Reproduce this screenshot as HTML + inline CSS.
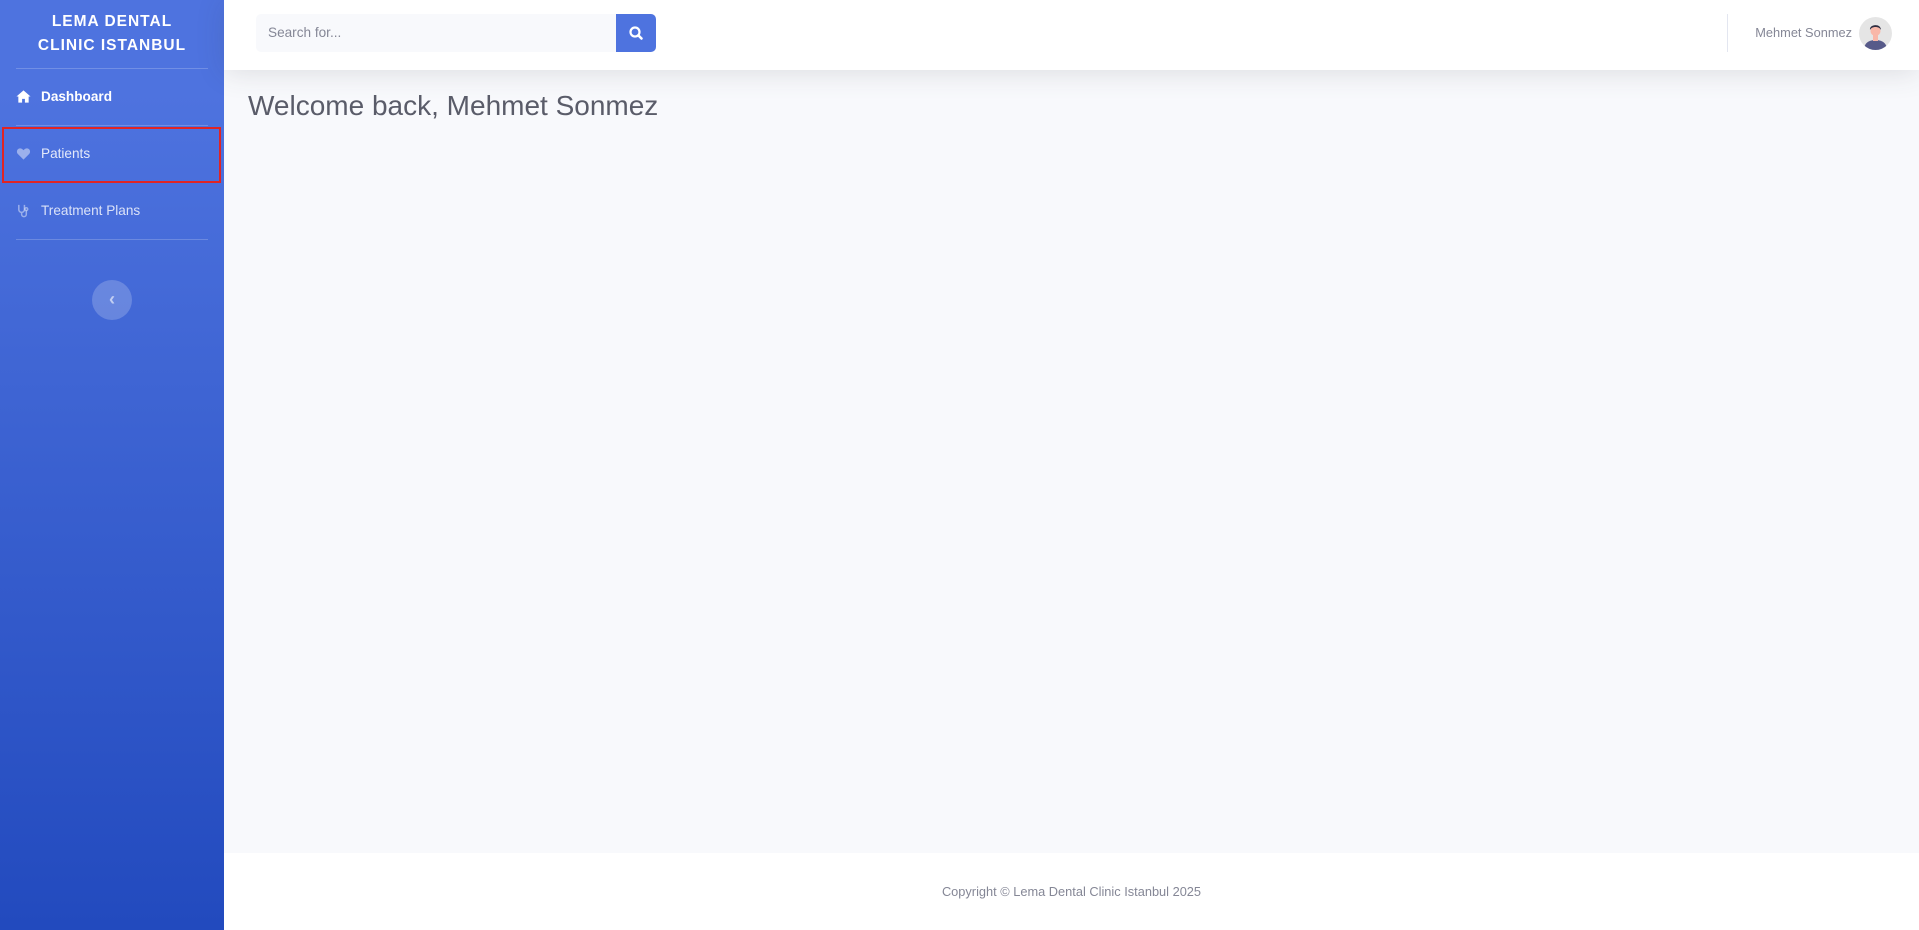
<!DOCTYPE html>
<html><head><meta charset="utf-8"><style>
*{box-sizing:border-box;margin:0;padding:0}
body{width:1919px;height:930px;overflow:hidden;font-family:"Liberation Sans",sans-serif;background:#f8f9fc;position:relative}
.sb{position:absolute;left:0;top:0;width:224px;height:930px;background:linear-gradient(180deg,#4e73df 10%,#224abe 100%);color:#fff}
.brand{position:absolute;top:10px;left:0;width:224px;text-align:center;font-weight:800;font-size:15.5px;letter-spacing:1px;line-height:24px;text-transform:uppercase}
.hr{position:absolute;left:16px;width:192px;border-top:1px solid rgba(255,255,255,.2)}
.item{position:absolute;left:16px;font-size:13.6px;display:flex;align-items:center;gap:10px}
.item svg{width:15px;height:15px}
.red{position:absolute;left:2px;top:127px;width:219px;height:56px;border:2px solid #e02424}
.tog{position:absolute;left:92px;top:280px;width:40px;height:40px;border-radius:50%;background:rgba(255,255,255,.2);color:rgba(255,255,255,.6);text-align:center;line-height:38px;font-weight:bold;font-size:18px}
.top{position:absolute;left:224px;top:0;width:1695px;height:70px;background:#fff;box-shadow:0 .15rem 1.75rem 0 rgba(58,59,69,.15)}
.search{position:absolute;left:32px;top:14px;width:360px;height:38px;background:#f8f9fc;border-radius:5px 0 0 5px;color:#858796;font-size:13.6px;padding-left:12px;line-height:38px}
.btn{position:absolute;left:392px;top:14px;width:40px;height:38px;background:#4e73df;border-radius:0 5px 5px 0}
.vr{position:absolute;left:1503px;top:14px;height:38px;border-left:1px solid #e3e6f0}
.uname{position:absolute;right:67px;top:25px;font-size:12.8px;color:#858796}
.av{position:absolute;right:27px;top:17px;width:33px;height:33px;border-radius:50%;background:#e5e5e5;overflow:hidden}
h1{position:absolute;left:248px;top:90px;font-weight:400;font-size:28px;color:#5a5c69}
.foot{position:absolute;left:224px;top:853px;width:1695px;height:77px;background:#fff;text-align:center;font-size:12.8px;color:#858796;line-height:77px}
</style></head><body>
<div class="sb">
<div class="brand">Lema Dental<br>Clinic Istanbul</div>
<div class="hr" style="top:68px"></div>
<div class="item" style="top:89px;font-weight:700"><svg viewBox="0 0 16 16"><path d="M8 1.5 0.5 8h2v6.5h4v-4h3v4h4V8h2z" fill="#fff"/></svg>Dashboard</div>
<div class="hr" style="top:125px"></div>
<div class="item" style="top:146px;color:rgba(255,255,255,.85)"><svg viewBox="0 0 16 16"><path d="M8 14.5 2 8.5C0 6.5 1 2.5 4.5 2.5 6 2.5 7 3.5 8 4.5 9 3.5 10 2.5 11.5 2.5 15 2.5 16 6.5 14 8.5z" fill="rgba(255,255,255,.45)"/></svg>Patients</div>
<div class="red"></div>
<div class="item" style="top:203px;color:rgba(255,255,255,.8)"><svg viewBox="0 0 16 16" fill="none" stroke="rgba(255,255,255,.45)" stroke-width="1.6"><path d="M3 2v5a3 3 0 0 0 6 0V2M6 10v2a2.5 2.5 0 0 0 5 0V8"/><circle cx="11" cy="6.5" r="1.5"/></svg>Treatment Plans</div>
<div class="hr" style="top:239px"></div>
<div class="tog">‹</div>
</div>
<div class="top">
<div class="search">Search for...</div>
<div class="btn"><svg viewBox="0 0 40 38" width="40" height="38"><circle cx="19" cy="18" r="4.5" fill="none" stroke="#fff" stroke-width="2.2"/><path d="M22.5 21.5 25.5 24.5" stroke="#fff" stroke-width="2.6" stroke-linecap="round"/></svg></div>
<div class="vr"></div>
<div class="uname">Mehmet Sonmez</div>
<div class="av"><svg viewBox="0 0 33 33" width="33" height="33"><path d="M5 33c0-7 5-10 11.5-10S28 26 28 33z" fill="#575a89"/><rect x="14" y="18" width="5" height="6" fill="#f9b7a8"/><circle cx="16.5" cy="14" r="5" fill="#f9b7a8"/><path d="M11 13c-1-6 11-7 11 0-1-2-3-3-5.5-3S12 11 11 13z" fill="#2f2e41"/></svg></div>
</div>
<h1>Welcome back, Mehmet Sonmez</h1>
<div class="foot">Copyright © Lema Dental Clinic Istanbul 2025</div>
</body></html>
